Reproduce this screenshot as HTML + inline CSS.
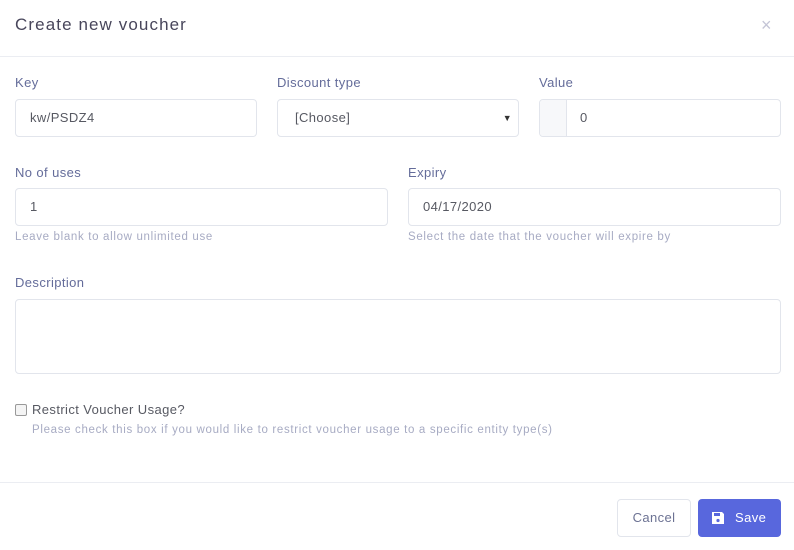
<!DOCTYPE html>
<html><head><style>
*{box-sizing:border-box;margin:0;padding:0}
body{width:794px;height:550px;background:#fff;font-family:"Liberation Sans",sans-serif;position:relative;overflow:hidden;color:#575962;letter-spacing:0.4px}
.a{position:absolute}
.lbl{font-size:13px;color:#646c9a;}
.inp{position:absolute;border:1px solid #e2e5ec;border-radius:4px;height:38px;font-size:13px;color:#575962;padding:0 0 0 14px;line-height:36px;background:#fff}
.help{font-size:11.5px;color:#a7abc3;letter-spacing:0.67px}
</style></head><body>
<div class="a" style="left:15px;top:15px;font-size:17px;color:#48465b;letter-spacing:1.1px">Create new voucher</div>
<div class="a" style="left:761px;top:15px;font-size:18px;color:#c4c5d6">×</div>
<div class="a" style="left:0;top:56px;width:794px;height:1px;background:#ebedf2"></div>

<div class="a lbl" style="left:15px;top:75px">Key</div>
<div class="a lbl" style="left:277px;top:75px">Discount type</div>
<div class="a lbl" style="left:539px;top:75px">Value</div>
<div class="inp" style="left:15px;top:99px;width:242px">kw/PSDZ4</div>
<div class="inp" style="left:277px;top:99px;width:242px;padding-left:17px">[Choose]<span class="a" style="right:6px;top:0;font-size:9px;color:#333">▼</span></div>
<div class="inp" style="left:539px;top:99px;width:242px;padding-left:40px">0<div class="a" style="left:0;top:0;width:27px;height:36px;background:#f7f8fa;border-right:1px solid #e2e5ec;border-radius:4px 0 0 4px"></div></div>

<div class="a lbl" style="left:15px;top:165px">No of uses</div>
<div class="a lbl" style="left:408px;top:165px">Expiry</div>
<div class="inp" style="left:15px;top:188px;width:373px">1</div>
<div class="inp" style="left:408px;top:188px;width:373px">04/17/2020</div>
<div class="a help" style="left:15px;top:231px">Leave blank to allow unlimited use</div>
<div class="a help" style="left:408px;top:231px">Select the date that the voucher will expire by</div>

<div class="a lbl" style="left:15px;top:275px">Description</div>
<div class="inp" style="left:15px;top:299px;width:766px;height:75px"></div>

<div class="a" style="left:15px;top:404px;width:12px;height:12px;border:1px solid #999;border-radius:2px;background:#f4f4f4"></div>
<div class="a lbl" style="left:32px;top:402px;color:#575962">Restrict Voucher Usage?</div>
<div class="a help" style="left:32px;top:424px">Please check this box if you would like to restrict voucher usage to a specific entity type(s)</div>

<div class="a" style="left:0;top:482px;width:794px;height:1px;background:#ebedf2"></div>
<div class="a" style="left:617px;top:499px;width:74px;height:38px;border:1px solid #e2e5ec;border-radius:4px;font-size:13px;line-height:36px;text-align:center;color:#6c7293">Cancel</div>
<div class="a" style="left:698px;top:499px;width:83px;height:38px;background:#5867dd;border-radius:4px;color:#fff;font-size:13px;line-height:38px;padding-left:37px">Save
<svg class="a" style="left:13px;top:12px" width="14" height="14" viewBox="0 0 14 14"><path d="M1 1h10l2 2v10H1z" fill="#fff"/><rect x="3" y="2" width="6" height="3" fill="#5867dd"/><circle cx="7" cy="9.5" r="1.6" fill="#5867dd"/></svg></div>
</body></html>
